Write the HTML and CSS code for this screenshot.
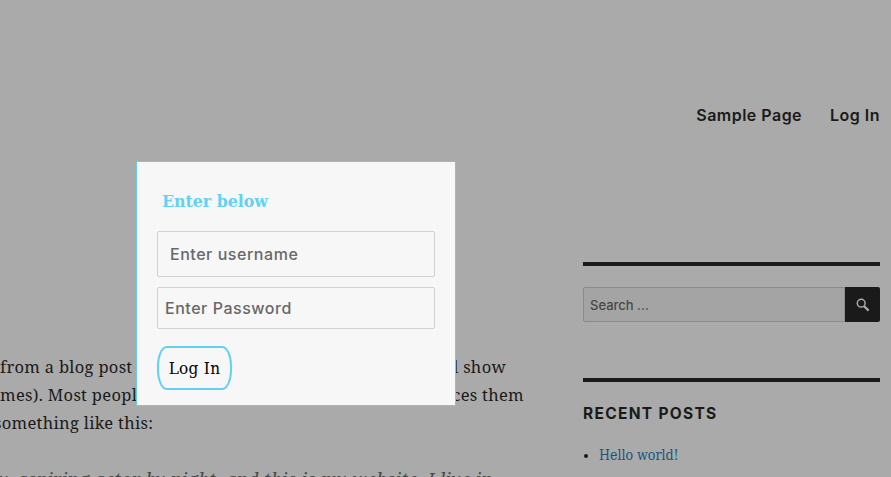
FILE: index.html
```html
<!DOCTYPE html>
<html lang="en">
<head>
<meta charset="utf-8">
<title>Sample Page</title>
<link rel="stylesheet" href="styles.css">
</head>
<body>
<div class="site">
  <nav class="nav"><a class="nav-page">Sample Page</a><a class="nav-login">Log In</a></nav>
  <div class="columns">
    <main class="content">
      <p class="line"><span class="lead l1">from a blog post</span><span class="tail t1">will show</span></p>
      <p class="line"><span class="lead l2">mes). Most people</span><span class="tail t2">introduces them</span></p>
      <p class="line"><span class="lead l3">something like this:</span></p>
      <blockquote class="quote">y, aspiring actor by night, and this is my website. I live in</blockquote>
    </main>
    <aside class="sidebar">
      <section class="widget search-widget">
        <form class="search">
          <div class="search-field"><span>Search …</span></div>
          <div class="search-button">
            <svg width="14" height="14" viewBox="0 0 14 14" fill="none" stroke="#aaa"><circle cx="5.2" cy="5.2" r="3.9" stroke-width="1.5"/><path d="M8.2 8.2L12.6 12.6" stroke-width="2.2"/></svg>
          </div>
        </form>
      </section>
      <section class="widget">
        <h2 class="widget-title">RECENT POSTS</h2>
        <ul class="posts"><li><a>Hello world!</a></li></ul>
      </section>
    </aside>
  </div>
</div>
<div class="modal">
  <h3 class="modal-title"><span>Enter below</span></h3>
  <div class="field username"><span>Enter username</span></div>
  <div class="field password"><span>Enter Password</span></div>
  <div class="submit"><span>Log In</span></div>
</div>
</body>
</html>
```
FILE: styles.css
```css
* { box-sizing: border-box; }
body { margin: 0; width: 891px; height: 477px; overflow: hidden; background: #aaa; color: #1a1a1a; font-family: "DejaVu Serif Condensed", "DejaVu Serif", serif; }
span, a { white-space: nowrap; }
.nav { display: flex; justify-content: flex-end; gap: 28px; height: 262px; padding: 103px 11px 0 0; font: 600 16px/25px Inter, sans-serif; letter-spacing: .48px; }
.columns { display: flex; justify-content: space-between; padding-right: 11px; }
.content { width: 525px; padding-top: 91px; font-family: "Noto Serif", "DejaVu Serif", serif; font-size: 16.5px; font-stretch: condensed; letter-spacing: .3px; }
.line { display: flex; justify-content: space-between; margin: 0; height: 28px; line-height: 28px; }
.l3 { margin-left: -6px; }
.t1 { margin-right: 19px; }
.t2 { margin-right: 1px; }
.quote { margin: 25px 0 0 -1px; font-size: 18px; line-height: 34px; font-style: italic; letter-spacing: .36px; color: #484848; white-space: nowrap; }
.sidebar { width: 297px; }
.widget { border-top: 4px solid #1a1a1a; }
.search-widget { height: 116px; padding-top: 21px; }
.search { display: flex; height: 35px; margin: 0; }
.search-field { display: flex; align-items: center; width: 262px; padding-left: 6px; border: 1px solid #8b8b8b; border-radius: 2px 0 0 2px; background: #a4a4a4; color: #484848; font: 500 13px Inter, sans-serif; }
.search-button { display: flex; align-items: center; justify-content: center; width: 35px; border-radius: 0 2px 2px 0; background: #1a1a1a; }
.widget-title { margin: 22px 0 0; font: 700 15.5px/19px Inter, sans-serif; letter-spacing: 1.3px; white-space: nowrap; }
.posts { margin: 20px 0 0; padding-left: 16px; font-size: 14px; line-height: 24px; }
.posts a { color: #155385; }
.modal { position: absolute; left: 136px; top: 161px; width: 320px; height: 245px; padding: 25px 20px 0; border: 1px solid #66cdec; background: #f7f7f7; }
.modal-title { height: 44px; margin: 0; padding-left: 5px; color: #62d2f4; font: bold 15.8px/30px "DejaVu Serif", serif; }
.field { display: flex; align-items: center; width: 278px; border: 1px solid #d1d1d1; border-radius: 2px; color: #686868; font: 500 16px Inter, sans-serif; letter-spacing: .54px; }
.username { height: 46px; padding-left: 12px; }
.password { height: 42px; margin-top: 10px; padding-left: 7px; }
.submit { display: flex; align-items: center; justify-content: center; width: 75px; height: 44px; margin-top: 17px; border: 2px solid #62d2f4; border-radius: 10px / 20px; color: #000; font-size: 17px; letter-spacing: .3px; }
```
